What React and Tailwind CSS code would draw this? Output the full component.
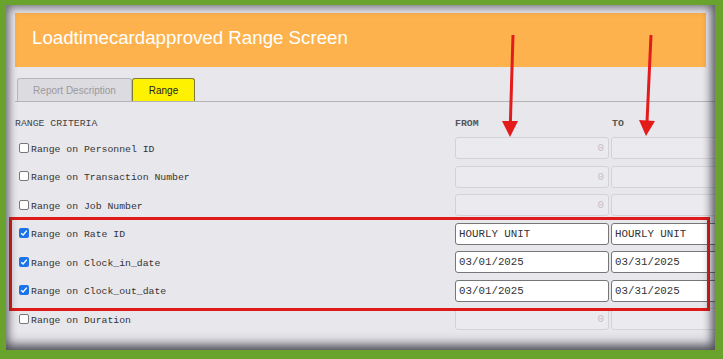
import React from "react";

const rows = [
  { label: "Range on Personnel ID", checked: false },
  { label: "Range on Transaction Number", checked: false },
  { label: "Range on Job Number", checked: false },
  { label: "Range on Rate ID", checked: true, from: "HOURLY UNIT", to: "HOURLY UNIT" },
  { label: "Range on Clock_in_date", checked: true, from: "03/01/2025", to: "03/31/2025" },
  { label: "Range on Clock_out_date", checked: true, from: "03/01/2025", to: "03/31/2025" },
  { label: "Range on Duration", checked: false },
];

function Check({ checked }) {
  if (checked) {
    return (
      <span className="w-[10px] h-[10px] rounded-[2px] bg-[#1a73e8] flex items-center justify-center">
        <svg width="8" height="8" viewBox="0 0 8 8">
          <path d="M1.2 4.2 L3.1 6 L6.8 1.6" fill="none" stroke="#fff" strokeWidth="1.4" />
        </svg>
      </span>
    );
  }
  return <span className="block w-[10px] h-[10px] rounded-[2px] bg-white border border-[#777]" />;
}

function Field({ value, disabled, showZero }) {
  if (disabled) {
    return (
      <div className="w-[154px] h-[22px] shrink-0 rounded-[3px] border border-[#d3d2d7] bg-[#ebeaee] flex items-center justify-end pr-[4px] text-[10.8px] text-[#c2c2c6] font-['Liberation_Mono',monospace]">
        {showZero ? "0" : ""}
      </div>
    );
  }
  return (
    <div className="w-[154px] h-[22px] shrink-0 rounded-[3px] border border-[#777] bg-white flex items-center pl-[3px] text-[10.8px] text-[#333] font-['Liberation_Mono',monospace]">
      {value}
    </div>
  );
}

export default function App() {
  return (
    <div className="relative w-[723px] h-[359px] bg-[#6aa22e] pt-[5px] pl-[6px] pr-[8px] pb-[9px] overflow-hidden">
      <div className="relative h-full bg-[#e8e7ec] overflow-hidden pt-[8px] pl-[9px]">
        <div className="h-[54px] mr-[9px] bg-[#feb24d] flex items-center pl-[17px] pb-[4px]">
          <span className="text-white text-[18.7px] font-['Liberation_Sans',Arial,sans-serif]">
            Loadtimecardapproved Range Screen
          </span>
        </div>
        <div className="mt-[11px] flex items-end pl-[2px] border-b border-[#b4b4b8] h-[24px] font-['Liberation_Sans',Arial,sans-serif] text-[10px]">
          <div className="w-[115px] h-[23px] bg-[#dcdbe0] border border-b-0 border-[#b8b8bc] rounded-t-[3px] flex items-center justify-center text-[#9a9a9e]">
            Report Description
          </div>
          <div className="w-[63px] h-[23px] bg-[#fff200] border border-b-0 border-[#7c7a3c] rounded-t-[3px] flex items-center justify-center text-[#222]">
            Range
          </div>
        </div>
        <div className="flex items-center h-[20px] mt-[12px] font-['Liberation_Mono',monospace] text-[9.8px] text-[#444]">
          <span className="w-[440px] shrink-0">RANGE CRITERIA</span>
          <span className="w-[157px] shrink-0 font-bold text-[#555]">FROM</span>
          <span className="font-bold text-[#555]">TO</span>
        </div>
        <div className="flex flex-col">
          {rows.map((r, i) => (
            <div key={i} className="flex items-center h-[28.5px]">
              <div className="w-[440px] shrink-0 flex items-center gap-[2px] pl-[4px] font-['Liberation_Mono',monospace] text-[9.8px] text-[#333]">
                <span className="flex -mt-[1px]">
                  <Check checked={r.checked} />
                </span>
                <span className="mt-[3px] leading-none">{r.label}</span>
              </div>
              <div className="flex gap-[2px]">
                <Field value={r.from} disabled={!r.checked} showZero />
                <Field value={r.to} disabled={!r.checked} />
              </div>
            </div>
          ))}
        </div>
        <div className="absolute left-[3px] top-[212px] w-[701px] h-[94px] border-[3px] border-[#e01a1a] pointer-events-none" />
        <div className="absolute inset-0 pointer-events-none shadow-[inset_0_0_9px_3px_rgba(30,30,40,0.55),inset_-3px_-8px_12px_-2px_rgba(20,20,30,0.45)]" />
      </div>
      <svg className="absolute left-0 top-0 pointer-events-none" width="723" height="359" viewBox="0 0 723 359">
        <line x1="513" y1="35" x2="510.4" y2="122" stroke="#e41b1b" strokeWidth="3" />
        <polygon points="502,121 518,121 510,137" fill="#e41b1b" />
        <line x1="651" y1="35" x2="647" y2="122" stroke="#e41b1b" strokeWidth="3" />
        <polygon points="639,120 655,121 646,136" fill="#e41b1b" />
      </svg>
    </div>
  );
}
